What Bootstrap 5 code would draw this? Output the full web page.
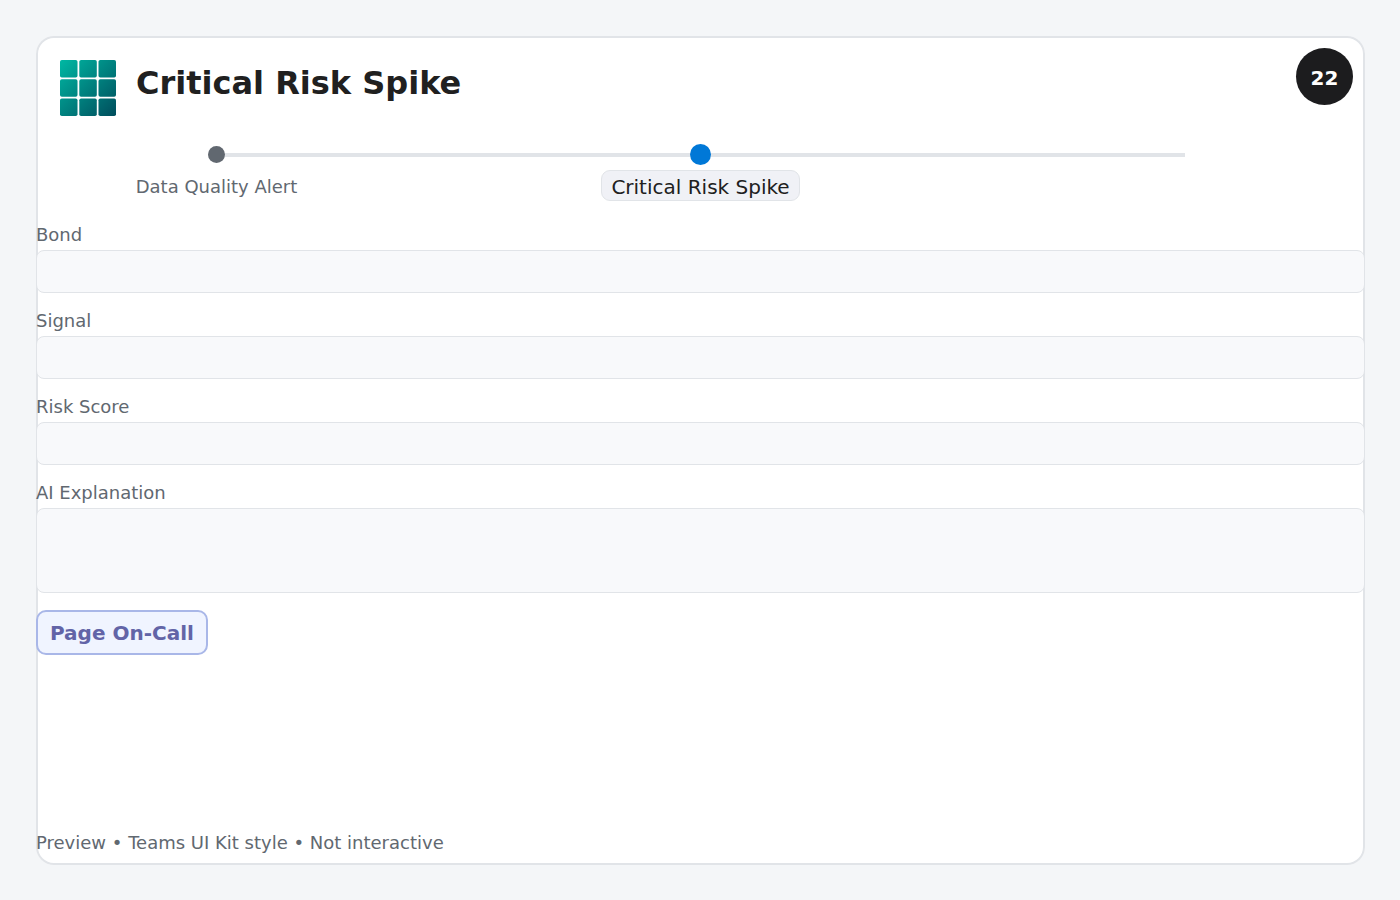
<!DOCTYPE html>
<html lang="en">
<head>
<meta charset="utf-8">
<meta name="viewport" content="width=device-width, initial-scale=1">
<title>Critical Risk Spike</title>
<link href="https://cdn.jsdelivr.net/npm/bootstrap@5.3.0/dist/css/bootstrap.min.css" rel="stylesheet">
<style>
  body { background: #f4f6f8; color: #616870; font-family: "DejaVu Sans", sans-serif; font-size: 18px; line-height: 24px; }
  .page { padding: 36px 35px 35px 36px; }
  /* outline drawn inside the card so that full-width fields cover it */
  .panel { background: #fff; border-radius: 18px; box-shadow: inset 0 0 0 2px #e1e4e8; padding-bottom: 10px; }
  .panel-head { padding: 24px 84px 0 24px; gap: 20px; }
  .panel-head h1 { font-size: 32px; line-height: 46px; color: #202020; }
  .count { top: 12px; right: 12px; width: 57px; height: 57px; padding-top: 2px; background: #1c1c1e; font-size: 20px; }
  .track { margin: 28px 180px 21px; background: linear-gradient(#e1e4e8, #e1e4e8) 0 9px / 100% 4px no-repeat; }
  .stage { width: 1px; gap: 5px; }
  .dot-row { height: 21px; }
  .dot { width: 17px; height: 17px; background: #616870; }
  .dot.now { width: 21px; height: 21px; background: #0078d7; }
  .stage-name { line-height: 31px; padding-top: 1px; }
  .chip { font-size: 20px; line-height: 29px; padding: 2px 9px 0; height: 31px; color: #202020; background: #f0f1f6; border: 1px solid #e1e4e8; border-radius: 9px; }
  .fields { gap: 16px; }
  .form-label { margin-bottom: 3px; }
  .form-control, .form-control:focus { background: #f8f9fb; border: 1px solid #e1e4e8; border-radius: 8px; height: 43px; resize: none; }
  textarea.form-control, textarea.form-control:focus { height: 85px; }
  .btn-page, .btn-page:hover { margin-top: 17px; font-size: 20px; line-height: 25px; padding: 9px 12px 7px; height: 45px; color: #6264a7; background: #f0f4ff; border: 2px solid #a9b7e8; border-radius: 10px; }
</style>
</head>
<body>
<main class="page min-vh-100 d-flex flex-column">
  <section class="panel position-relative flex-grow-1 d-flex flex-column">
    <header class="panel-head d-flex align-items-start">
      <svg class="flex-shrink-0" width="56" height="56" viewBox="0 0 56 56" aria-hidden="true">
        <defs>
          <linearGradient id="teal" gradientUnits="userSpaceOnUse" x1="0" y1="0" x2="56" y2="56">
            <stop offset="0" stop-color="#00b8a3"/><stop offset="1" stop-color="#004d5c"/>
          </linearGradient>
        </defs>
        <g fill="url(#teal)">
          <rect x="0" y="0" width="17.5" height="17.5" rx="1.8"/><rect x="19.3" y="0" width="17.5" height="17.5" rx="1.8"/><rect x="38.5" y="0" width="17.5" height="17.5" rx="1.8"/>
          <rect x="0" y="19.3" width="17.5" height="17.5" rx="1.8"/><rect x="19.3" y="19.3" width="17.5" height="17.5" rx="1.8"/><rect x="38.5" y="19.3" width="17.5" height="17.5" rx="1.8"/>
          <rect x="0" y="38.5" width="17.5" height="17.5" rx="1.8"/><rect x="19.3" y="38.5" width="17.5" height="17.5" rx="1.8"/><rect x="38.5" y="38.5" width="17.5" height="17.5" rx="1.8"/>
        </g>
      </svg>
      <h1 class="fw-bold m-0">Critical Risk Spike</h1>
      <span class="count position-absolute rounded-circle d-flex align-items-center justify-content-center text-white fw-bold">22</span>
    </header>

    <div class="track d-flex justify-content-between text-nowrap">
      <div class="stage d-flex flex-column align-items-center">
        <div class="dot-row d-flex align-items-center"><span class="dot rounded-circle"></span></div>
        <span class="stage-name">Data Quality Alert</span>
      </div>
      <div class="stage d-flex flex-column align-items-center">
        <div class="dot-row d-flex align-items-center"><span class="dot now rounded-circle"></span></div>
        <span class="chip">Critical Risk Spike</span>
      </div>
      <div class="stage"></div>
    </div>

    <form class="d-flex flex-column flex-grow-1">
      <div class="fields d-flex flex-column">
        <div><label class="form-label d-block" for="bond">Bond</label><input class="form-control" id="bond" type="text" readonly></div>
        <div><label class="form-label d-block" for="signal">Signal</label><input class="form-control" id="signal" type="text" readonly></div>
        <div><label class="form-label d-block" for="score">Risk Score</label><input class="form-control" id="score" type="text" readonly></div>
        <div><label class="form-label d-block" for="explanation">AI Explanation</label><textarea class="form-control d-block" id="explanation" readonly></textarea></div>
      </div>
      <button class="btn btn-page fw-bold align-self-start" type="button">Page On-Call</button>
    </form>

    <footer>Preview • Teams UI Kit style • Not interactive</footer>
  </section>
</main>
<script src="https://cdn.jsdelivr.net/npm/bootstrap@5.3.0/dist/js/bootstrap.bundle.min.js"></script>
</body>
</html>
